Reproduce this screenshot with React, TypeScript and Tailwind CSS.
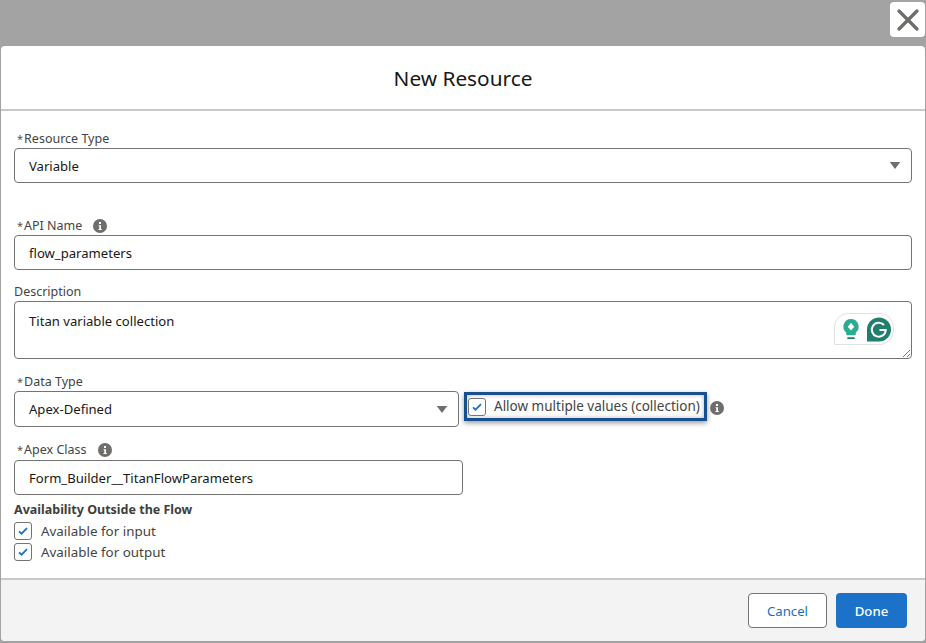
import React from "react";
import { X } from "lucide-react";

const font = "font-['Noto_Sans','Open_Sans',sans-serif]";

const InfoDot = ({ className = "" }: { className?: string }) => (
  <span
    className={`flex h-[14px] w-[14px] shrink-0 items-center justify-center rounded-full bg-[#706e6b] ${className}`}
  >
    <svg viewBox="0 0 14 14" className="h-[14px] w-[14px]">
      <rect x="6" y="3" width="2" height="2" fill="#fff" />
      <path d="M5.6 6.2H8V10H8.8V11H5.4V10H6.3V7.2H5.6Z" fill="#fff" />
    </svg>
  </span>
);

const Label = ({ text, required, info }: { text: string; required?: boolean; info?: boolean }) => (
  <div className="flex h-[18px] items-center text-[12.5px] leading-[18px] text-[#444]">
    {required && <span className="ml-[3px] mr-px text-[11px] text-[#555]">*</span>}
    <span>{text}</span>
    {info && <InfoDot className="ml-[11px]" />}
  </div>
);

const Caret = () => (
  <svg viewBox="0 0 12 8" className="h-[7px] w-[12px]">
    <path d="M0 0H12L6 8Z" fill="#706e6b" />
  </svg>
);

const Check = () => (
  <span className="flex h-[18px] w-[18px] shrink-0 items-center justify-center rounded-[3px] border border-[#747474] bg-white">
    <svg viewBox="0 0 12 10" className="h-[8px] w-[10px]">
      <path d="M1 5.5L4.2 8.4L11 1.4" fill="none" stroke="#1b72c4" strokeWidth="2.2" />
    </svg>
  </span>
);

const Field = ({ value, className = "" }: { value: string; className?: string }) => (
  <div
    className={`flex h-[35px] items-center rounded-[4px] border border-[#747474] bg-white pl-[14px] pt-[2px] text-[13.1px] text-[#181818] ${className}`}
  >
    {value}
  </div>
);

const SelectField = ({ value, className = "" }: { value: string; className?: string }) => (
  <div
    className={`flex items-center justify-between rounded-[4px] border border-[#747474] bg-white pl-[14px] pr-[10px] text-[13.1px] text-[#181818] ${className}`}
  >
    <span className="pt-[2px]">{value}</span>
    <Caret />
  </div>
);

const GrammarlyBadge = () => (
  <div className="flex h-[32px] w-[60px] items-center gap-[5px] rounded-[14px] rounded-bl-none border border-[#dfe3e1] bg-white pl-[7px]">
    <svg viewBox="0 0 18 24" className="h-[23px] w-[18px] shrink-0">
      <path d="M9 1a8 8 0 0 1 5 14.2V17a1 1 0 0 1-1 1H5a1 1 0 0 1-1-1v-1.8A8 8 0 0 1 9 1Z" fill="#2bab92" />
      <path d="M9 5l3.4 4L9 13 5.6 9Z" fill="#fff" />
      <rect x="5" y="20" width="8" height="2" rx="1" fill="#1c7d6b" />
    </svg>
    <svg viewBox="0 0 28 24" className="h-[25px] w-[28px] shrink-0">
      <path d="M14 0a12 12 0 1 1 0 24H2V12A12 12 0 0 1 14 0Z" fill="#1f7f6c" />
      <path d="M19 7.5a7 7 0 1 0 1.8 5H14.5" fill="none" stroke="#fff" strokeWidth="2" />
    </svg>
  </div>
);

export default function App() {
  return (
    <div className={`flex h-[643px] w-[926px] flex-col overflow-hidden bg-[#a3a3a3] ${font}`}>
      <div className="flex h-[46px] shrink-0 items-start justify-end pr-px pt-[2px]">
        <button className="flex h-[35px] w-[35px] items-center justify-center overflow-hidden rounded-[4px] bg-white">
          <X className="h-[36px] w-[36px] shrink-0 text-[#706e6b]" strokeWidth={2.2} />
        </button>
      </div>

      <div className="mx-px flex h-[595px] flex-col overflow-hidden rounded-[4px] bg-white">
        <header className="flex h-[65px] shrink-0 items-center justify-center border-b-2 border-[#c9c9c9] pt-[2px] text-[20.8px] text-[#181818]">
          New Resource
        </header>

        <div className="flex flex-1 flex-col px-[13px] pt-[19px]">
          <Label text="Resource Type" required />
          <SelectField value="Variable" className="h-[35px] w-[898px]" />

          <div className="mt-[34px]">
            <Label text="API Name" required info />
          </div>
          <Field value="flow_parameters" className="w-[898px]" />

          <div className="mt-[13px]">
            <Label text="Description" />
          </div>
          <div className="relative h-[58px] w-[898px] rounded-[4px] border border-[#747474] bg-white pl-[14px] pt-[10px] text-[13.1px] leading-[18px] text-[#181818]">
            Titan variable collection
            <div className="absolute right-[17px] top-[11px]">
              <GrammarlyBadge />
            </div>
            <svg viewBox="0 0 8 8" className="absolute bottom-[1px] right-[1px] h-[8px] w-[8px]">
              <path d="M1 8L8 1M5 8L8 5" stroke="#777" strokeWidth="1" />
            </svg>
          </div>

          <div className="mt-[14px]">
            <Label text="Data Type" required />
          </div>
          <div className="flex items-start">
            <SelectField value="Apex-Defined" className="h-[36px] w-[445px]" />
            <div className="ml-[5px] mt-px flex h-[29px] w-[243px] items-center border-[3px] border-[#174f8f] pl-px shadow-[0_2px_5px_rgba(0,0,0,0.4),inset_0_0_4px_rgba(0,0,0,0.3)]">
              <Check />
              <span className="ml-[8px] whitespace-nowrap text-[13.5px] text-[#444]">
                Allow multiple values (collection)
              </span>
            </div>
            <InfoDot className="ml-[3px] mt-[10px]" />
          </div>

          <div className="mt-[14px]">
            <Label text="Apex Class" required info />
          </div>
          <Field value="Form_Builder__TitanFlowParameters" className="mt-px w-[449px]" />

          <div className="mt-[6px] h-[18px] text-[12.5px] font-bold leading-[18px] text-[#3e3e3c]">
            Availability Outside the Flow
          </div>
          <div className="mt-[3px] flex flex-col gap-[3px]">
            <div className="flex h-[18px] items-center text-[13.4px] text-[#444]">
              <Check />
              <span className="ml-[9px]">Available for input</span>
            </div>
            <div className="flex h-[18px] items-center text-[13.4px] text-[#444]">
              <Check />
              <span className="ml-[9px]">Available for output</span>
            </div>
          </div>
        </div>

        <footer className="flex h-[63px] shrink-0 items-center justify-end gap-[9px] border-t-2 border-[#c9c9c9] bg-[#f3f3f3] pr-[18px]">
          <button className="h-[35px] w-[79px] rounded-[4px] border border-[#747474] bg-white pt-[2px] text-[13.2px] text-[#1b6fb8]">
            Cancel
          </button>
          <button className="h-[35px] w-[71px] rounded-[4px] bg-[#1b72c8] pt-[2px] text-[13.2px] font-medium text-white">
            Done
          </button>
        </footer>
      </div>
    </div>
  );
}
